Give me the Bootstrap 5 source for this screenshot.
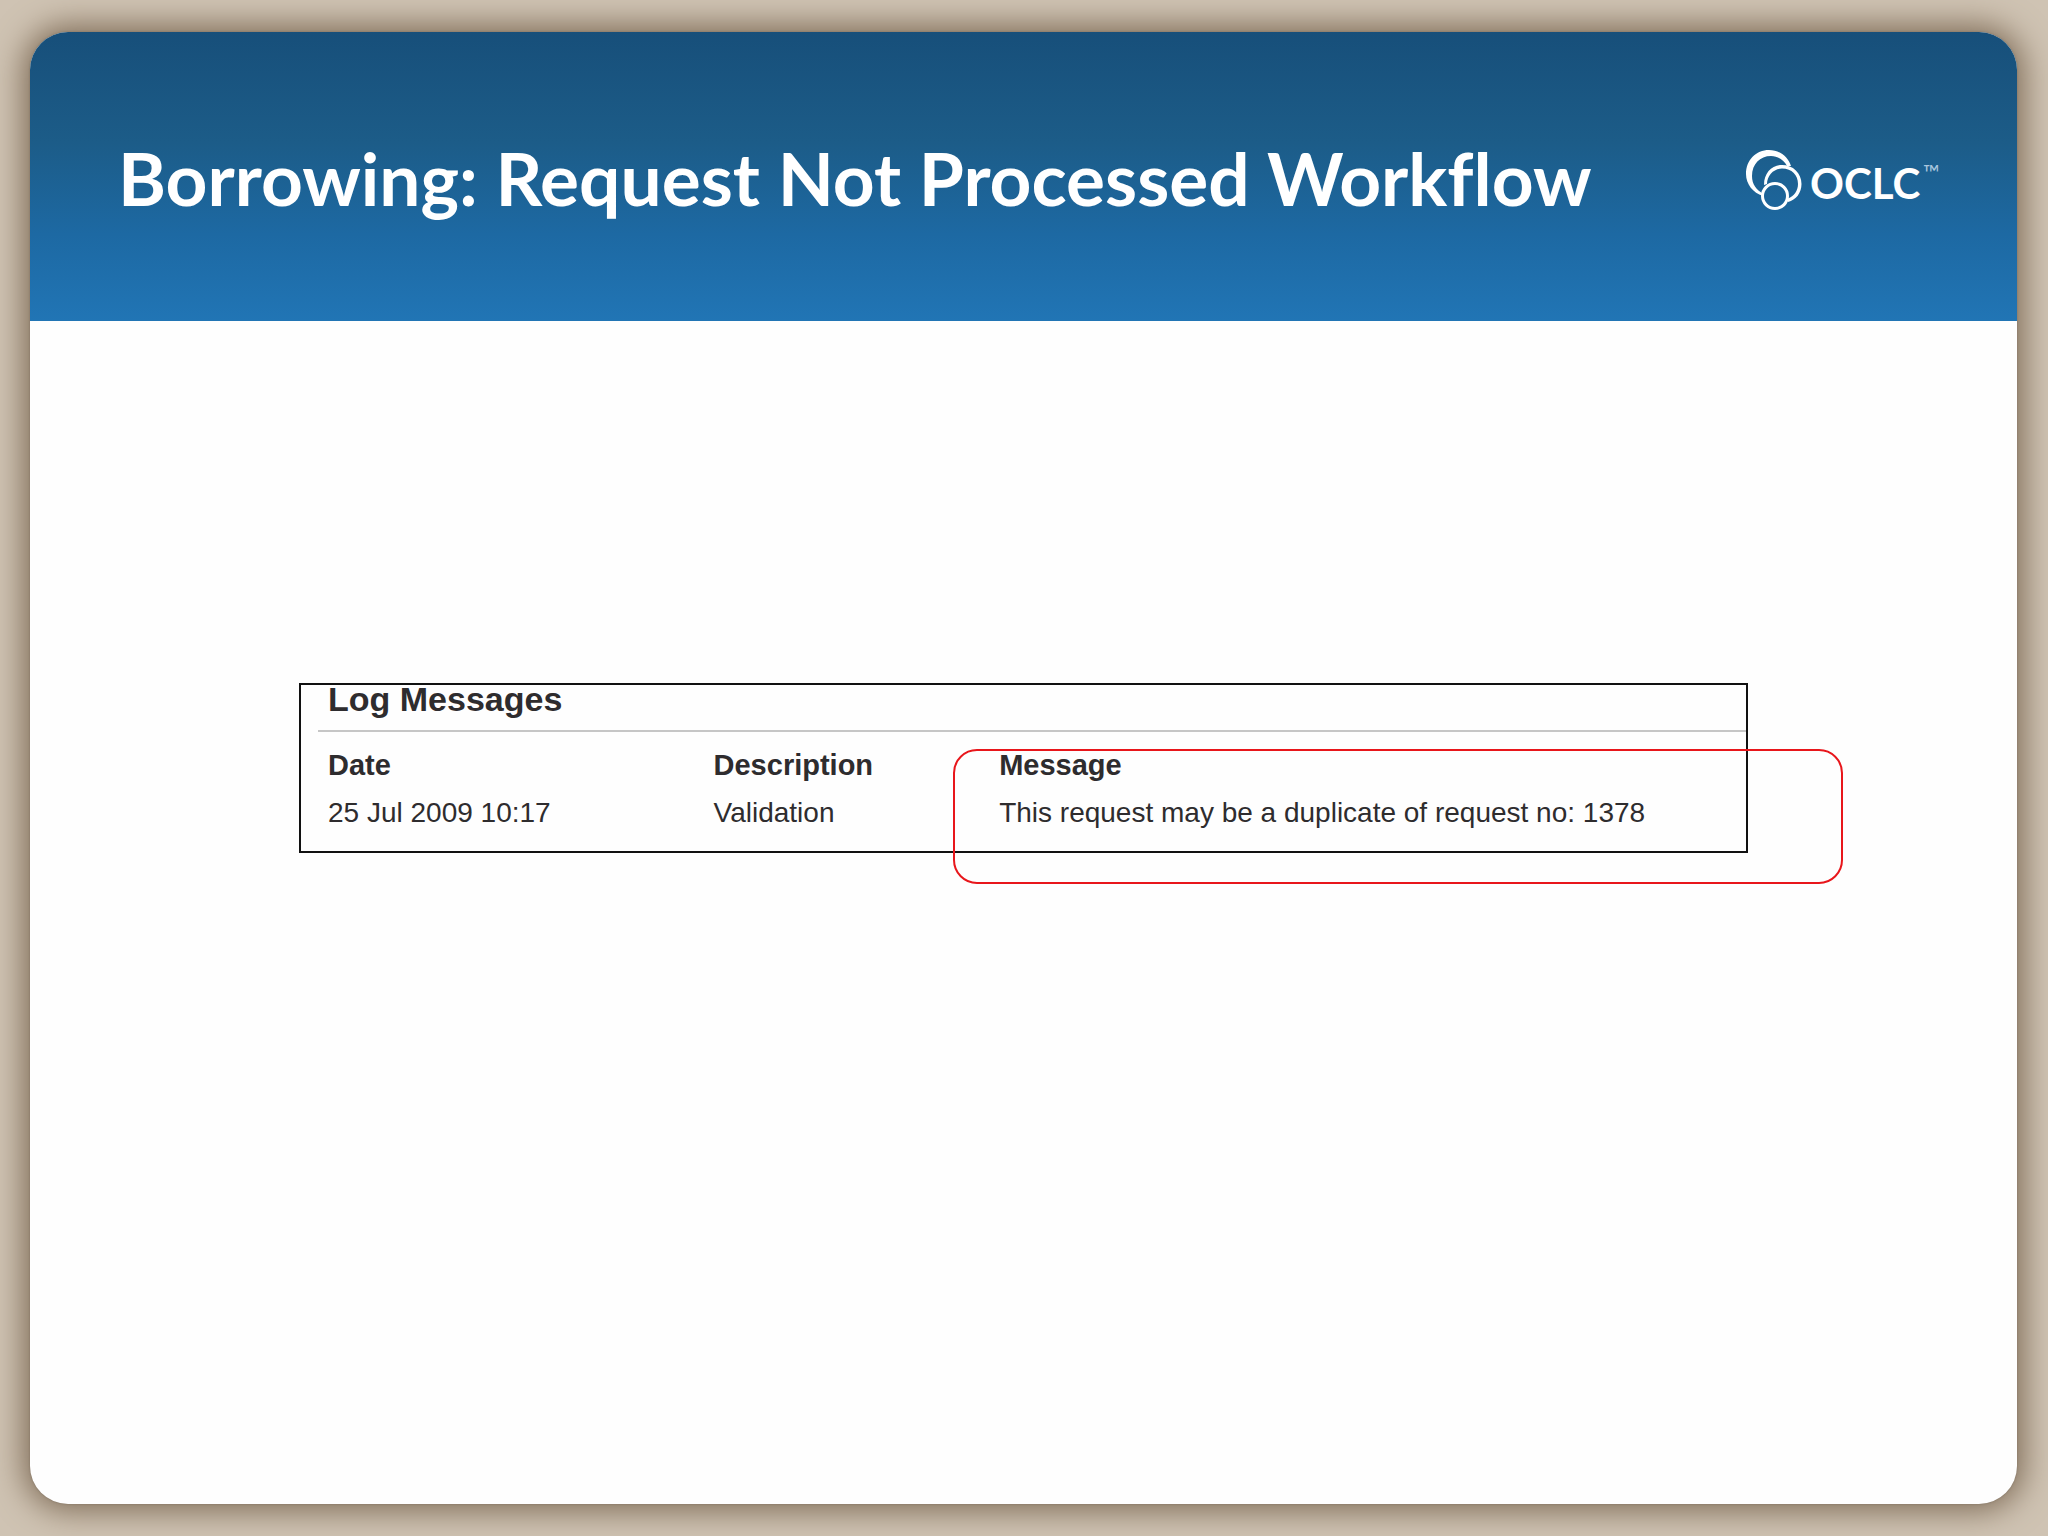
<!DOCTYPE html>
<html lang="en">
<head>
<meta charset="utf-8">
<meta name="viewport" content="width=device-width, initial-scale=1">
<title>Borrowing: Request Not Processed Workflow</title>
<link href="https://cdn.jsdelivr.net/npm/bootstrap@5.3.0/dist/css/bootstrap.min.css" rel="stylesheet">
<style>
body { background: #cfc3b3; padding: 32px 31px 32px 30px; font-family: "Liberation Sans", Arial, sans-serif; }
.slide { border-radius: 38px; background: #fefefe; box-shadow: 0 0 2px #7d6f5f, 0 0 32px 6px #7d6a55; }
.slide-head { background: linear-gradient(#174f7a, #1c5c88 38%, #1d69a3 70%, #2175b5); height: 289px; padding: 10px 72px 0 88px; border-radius: 38px 38px 0 0; }
.slide-title { font-family: Lato, sans-serif; font-size: 73px; line-height: 84px; padding-bottom: 8px; font-weight: 700; font-variant-ligatures: none; color: #fff; }
.brand { width: 200px; height: 64px; }
.slide-body { padding: 362px 24px 48px; }
.log { max-width: 1449px; border: 2px solid #111; padding: 0 0 15px 17px; color: #2e2c2e; }
.log-title { font-size: 34px; line-height: 28px; font-weight: 700; padding: 0 10px 17px; border-bottom: 2px solid #c6c6c6; }
.log-table { font-size: 28px; line-height: 47px; }
.log-table th, .log-table td { padding: 0 10px; }
.log-table thead { font-size: 29px; }
.log-table thead th { padding-top: 10px; }
.log-table .col-date { width: 27%; }
.log-table .col-desc { width: 20%; }
.callout { right: -97px; bottom: -33px; width: 890px; height: 135px; border: 2px solid #e8161b; border-radius: 24px; }
</style>
</head>
<body class="d-flex flex-column min-vh-100">
<div class="slide d-flex flex-column flex-grow-1">
  <header class="slide-head d-flex align-items-center justify-content-between">
    <h1 class="slide-title mb-0">Borrowing: Request Not Processed Workflow</h1>
    <svg class="brand flex-shrink-0" viewBox="0 0 200 64" role="img" aria-label="OCLC">
      <path fill="#fff" fill-rule="evenodd" d="M18 46C8 43 1 34 1 24C1 10 11 0 24 0C34 0 43 6 46 16L42 16C39 10 33 6 26 6C15 6 7 14 7 26C7 34 11 40 19 44Z"/>
      <path fill="#fff" fill-rule="evenodd" d="M19 35C19 23 27 15 37 15C48 15 56.500 23 56.500 34C56.500 43 51 50 43 52L43 48.500C49 46 53 41 53 34C53 25 47 18.500 37 18.500C29 18.500 22 25 22 34Z"/>
      <circle cx="30" cy="46" r="12.500" fill="none" stroke="#fff" stroke-width="3"/>
      <text x="65" y="49" font-family="Lato, sans-serif" font-size="42" font-weight="700" fill="#fff">OCLC</text>
      <text x="178" y="31" font-family="Lato, sans-serif" font-size="22" fill="#a9c6de">™</text>
    </svg>
  </header>
  <main class="slide-body flex-grow-1">
    <section class="log position-relative mx-auto">
      <h2 class="log-title mb-0">Log Messages</h2>
      <table class="log-table w-100">
        <colgroup><col class="col-date"><col class="col-desc"><col></colgroup>
        <thead><tr><th scope="col">Date</th><th scope="col">Description</th><th scope="col">Message</th></tr></thead>
        <tbody><tr><td>25 Jul 2009 10:17</td><td>Validation</td><td>This request may be a duplicate of request no: 1378</td></tr></tbody>
      </table>
      <div class="callout position-absolute"></div>
    </section>
  </main>
</div>
<script src="https://cdn.jsdelivr.net/npm/bootstrap@5.3.0/dist/js/bootstrap.bundle.min.js"></script>
</body>
</html>
